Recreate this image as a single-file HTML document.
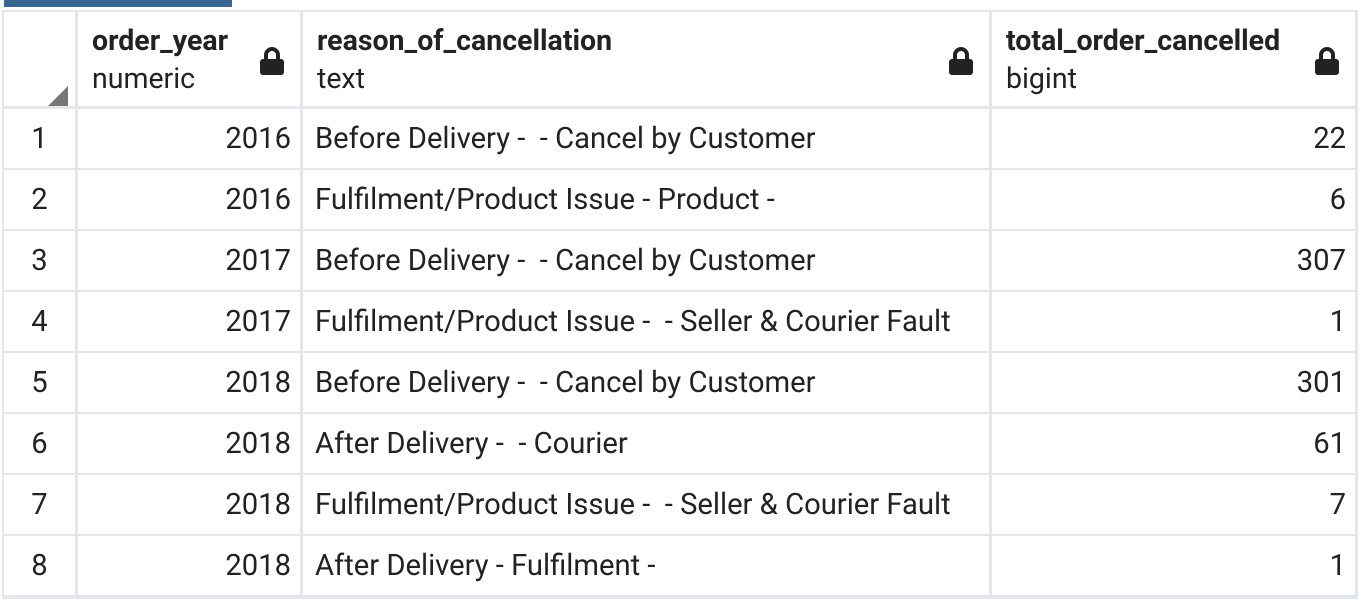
<!DOCTYPE html>
<html><head><style>
body{margin:0;width:1361px;height:601px;background:#fff;position:relative;overflow:hidden;font-family:"Roboto","Liberation Sans",sans-serif;color:#222;}
.bar{position:absolute;left:4px;top:0;width:228px;height:7px;background:#3a6791}
.grid{position:absolute;left:2px;top:10px;width:1356px;height:589px;background:#e3e6eb}
.c{position:absolute;background:#fff;font-size:29.2px;line-height:61px;white-space:nowrap;overflow:hidden;box-sizing:border-box}
.n{text-align:center}
.r{text-align:right;padding-right:9px}
.l{padding-left:12px}
.h{background:#fff}
.h b{position:absolute;left:14px;top:12px;font-size:28.5px;line-height:34px;font-weight:bold;color:#222}
.h span{position:absolute;left:14px;top:50px;font-size:28.5px;line-height:34px;color:#222}
.lock{position:absolute;top:34px;width:26px;height:30px}
.tri{position:absolute;left:40px;top:74px;width:0;height:0;border-left:24px solid transparent;border-bottom:24px solid #777}
</style></head><body>
<div class="bar"></div>
<div class="grid"></div>
<div class="c h" style="left:4px;top:12px;width:71px;height:94px"><div class="tri"></div></div>
<div class="c h" style="left:78px;top:12px;width:222px;height:94px"><b>order_year</b><span>numeric</span>
<svg class="lock" style="left:181px" viewBox="0 0 26 30"><path d="M7 14V9a6 6 0 0 1 12 0v5" fill="none" stroke="#222" stroke-width="4"/><rect x="1" y="13" width="24" height="16" rx="3" fill="#222"/></svg></div>
<div class="c h" style="left:303px;top:12px;width:686px;height:94px"><b>reason_of_cancellation</b><span>text</span>
<svg class="lock" style="left:645px" viewBox="0 0 26 30"><path d="M7 14V9a6 6 0 0 1 12 0v5" fill="none" stroke="#222" stroke-width="4"/><rect x="1" y="13" width="24" height="16" rx="3" fill="#222"/></svg></div>
<div class="c h" style="left:992px;top:12px;width:363px;height:94px"><b>total_order_cancelled</b><span>bigint</span>
<svg class="lock" style="left:322px" viewBox="0 0 26 30"><path d="M7 14V9a6 6 0 0 1 12 0v5" fill="none" stroke="#222" stroke-width="4"/><rect x="1" y="13" width="24" height="16" rx="3" fill="#222"/></svg></div>

<div class="c n" style="left:4px;top:109px;width:71px;height:59px">1</div><div class="c r" style="left:78px;top:109px;width:222px;height:59px">2016</div><div class="c l" style="left:303px;top:109px;width:686px;height:59px">Before Delivery -&nbsp; - Cancel by Customer</div><div class="c r" style="left:992px;top:109px;width:363px;height:59px">22</div>
<div class="c n" style="left:4px;top:170px;width:71px;height:59px">2</div><div class="c r" style="left:78px;top:170px;width:222px;height:59px">2016</div><div class="c l" style="left:303px;top:170px;width:686px;height:59px">Fulfilment/Product Issue - Product -</div><div class="c r" style="left:992px;top:170px;width:363px;height:59px">6</div>
<div class="c n" style="left:4px;top:231px;width:71px;height:59px">3</div><div class="c r" style="left:78px;top:231px;width:222px;height:59px">2017</div><div class="c l" style="left:303px;top:231px;width:686px;height:59px">Before Delivery -&nbsp; - Cancel by Customer</div><div class="c r" style="left:992px;top:231px;width:363px;height:59px">307</div>
<div class="c n" style="left:4px;top:292px;width:71px;height:59px">4</div><div class="c r" style="left:78px;top:292px;width:222px;height:59px">2017</div><div class="c l" style="left:303px;top:292px;width:686px;height:59px">Fulfilment/Product Issue -&nbsp; - Seller &amp; Courier Fault</div><div class="c r" style="left:992px;top:292px;width:363px;height:59px">1</div>
<div class="c n" style="left:4px;top:353px;width:71px;height:59px">5</div><div class="c r" style="left:78px;top:353px;width:222px;height:59px">2018</div><div class="c l" style="left:303px;top:353px;width:686px;height:59px">Before Delivery -&nbsp; - Cancel by Customer</div><div class="c r" style="left:992px;top:353px;width:363px;height:59px">301</div>
<div class="c n" style="left:4px;top:414px;width:71px;height:59px">6</div><div class="c r" style="left:78px;top:414px;width:222px;height:59px">2018</div><div class="c l" style="left:303px;top:414px;width:686px;height:59px">After Delivery -&nbsp; - Courier</div><div class="c r" style="left:992px;top:414px;width:363px;height:59px">61</div>
<div class="c n" style="left:4px;top:475px;width:71px;height:59px">7</div><div class="c r" style="left:78px;top:475px;width:222px;height:59px">2018</div><div class="c l" style="left:303px;top:475px;width:686px;height:59px">Fulfilment/Product Issue -&nbsp; - Seller &amp; Courier Fault</div><div class="c r" style="left:992px;top:475px;width:363px;height:59px">7</div>
<div class="c n" style="left:4px;top:536px;width:71px;height:59px">8</div><div class="c r" style="left:78px;top:536px;width:222px;height:59px">2018</div><div class="c l" style="left:303px;top:536px;width:686px;height:59px">After Delivery - Fulfilment -</div><div class="c r" style="left:992px;top:536px;width:363px;height:59px">1</div>
</body></html>
